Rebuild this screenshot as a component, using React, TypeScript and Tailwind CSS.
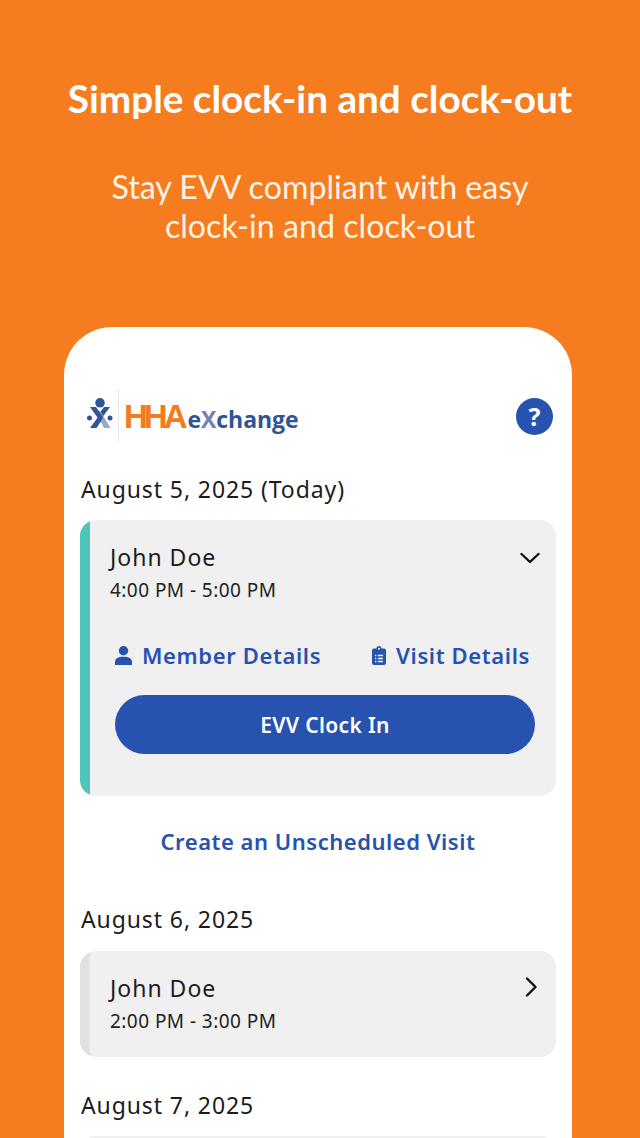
import React from "react";

const Logo = () => (
  <div className="flex items-start h-[52px]">
    <svg width="30" height="38" viewBox="0 0 30 38" className="ml-[5px] mt-[9px]">
      <circle cx="15" cy="4.8" r="4.8" fill="#2f5597" />
      <path d="M25 9 L19 9 L14.5 15 L17.5 19 Z" fill="#2f5597" />
      <path d="M19 30 L25.5 30 L15 12.5 L12 16.5 Z" fill="#9aa7c7" />
      <path d="M5 9 L11 9 L18 19 L15 23 Z" fill="#2f5597" />
      <path d="M5 30 L11.5 30 L17.5 21 L14.5 17 Z" fill="#2f5597" />
      <circle cx="4.5" cy="20" r="2.5" fill="#2f5597" />
      <circle cx="25" cy="20" r="2.5" fill="#2f5597" />
    </svg>
    <div className="w-px h-[52px] bg-[#e6e6e6] ml-[3px] mr-[5px]" />
    <div className="mt-[11px] flex items-baseline font-bold leading-none">
      <span className="font-['Liberation_Sans',sans-serif] text-[33px] tracking-[-4px] text-[#f47c20]">HHA</span>
      <span className="ml-[4px] font-['Open_Sans',sans-serif] text-[23px] tracking-[-0.05px] text-[#2f5597]">
        e<span className="text-[#6f83b3]">X</span>change
      </span>
    </div>
  </div>
);

const PersonIcon = () => (
  <svg width="17" height="19" viewBox="0 0 17 19" fill="#2752b0">
    <circle cx="8.5" cy="4.8" r="4.7" />
    <path d="M0 19 V16 C0 12.6 3.2 10.8 8.5 10.8 C13.8 10.8 17 12.6 17 16 V19 Z" />
  </svg>
);

const ClipboardIcon = () => (
  <svg width="14" height="19" viewBox="0 0 14 19">
    <path
      fill="#2752b0"
      d="M2 2.5 H4.4 C4.6 1 5.6 0 7 0 C8.4 0 9.4 1 9.6 2.5 H12 C13.1 2.5 14 3.4 14 4.5 V17 C14 18.1 13.1 19 12 19 H2 C0.9 19 0 18.1 0 17 V4.5 C0 3.4 0.9 2.5 2 2.5 Z"
    />
    <circle cx="7" cy="2.7" r="1" fill="#f0f0f0" />
    <path d="M3 9.5 H4.3 M5.8 9.5 H11 M3 12.5 H4.3 M5.8 12.5 H11 M3 15.5 H4.3 M5.8 15.5 H11" stroke="#f0f0f0" strokeWidth="1.3" />
  </svg>
);

const Chevron = ({ down }: { down?: boolean }) => (
  <svg width="20" height="20" viewBox="0 0 20 20" fill="none" stroke="#111111" strokeWidth="2.4" strokeLinecap="round" strokeLinejoin="round">
    {down ? <path d="M1.5 6 L10 14 L18.5 6" /> : <path d="M6 1.5 L14.5 10 L6 18.5" />}
  </svg>
);

const DateLabel = ({ children }: { children: React.ReactNode }) => (
  <div className="pl-[1px] text-[23px] leading-[32px] tracking-[0.9px] text-[#1c1c1c]">{children}</div>
);

const linkClass = "text-[22px] font-semibold leading-[30px] tracking-[0.62px] text-[#2752b0]";

export default function App() {
  return (
    <div className="h-[1138px] w-[640px] overflow-hidden bg-[#f67c20] flex flex-col font-['Noto_Sans',sans-serif]">
      <h1 className="mt-[75px] text-center font-['Lato',sans-serif] font-bold text-[38.7px] leading-[46px] text-white">
        Simple clock-in and clock-out
      </h1>
      <p className="mx-auto mt-[46px] w-[480px] text-center font-['Lato',sans-serif] text-[32.2px] leading-[39px] text-[#fff3e6]">
        Stay EVV compliant with easy clock-in and clock-out
      </p>

      <div className="ml-[64px] mt-[82px] w-[508px] flex-1 rounded-t-[48px] bg-white px-[16px] pt-[62px]">
        <div className="flex items-start justify-between">
          <Logo />
          <div className="mr-[3px] mt-[9px] flex h-[37px] w-[37px] items-center justify-center rounded-full bg-[#2752b0] text-[25px] font-bold leading-none text-white">
            ?
          </div>
        </div>

        <div className="mt-[32px]">
          <DateLabel>August 5, 2025 (Today)</DateLabel>
        </div>

        <div className="mt-[15px] flex h-[276px] overflow-hidden rounded-[16px] bg-[#f0f0f0]">
          <div className="w-[10px] bg-[#4fc4bd]" />
          <div className="flex-1 pl-[20px] pr-[20px] pt-[21px]">
            <div className="flex items-start justify-between">
              <div className="text-[23px] leading-[32px] tracking-[1px] text-[#1c1c1c]">John Doe</div>
              <div className="mr-[-4px] mt-[7px]"><Chevron down /></div>
            </div>
            <div className="mt-[1px] text-[19px] leading-[32px] tracking-[0.45px] text-[#222222]">4:00 PM - 5:00 PM</div>

            <div className="mt-[34px] flex items-center justify-between pl-[5px] pr-[6px]">
              <div className="flex items-center gap-[10px]">
                <PersonIcon />
                <span className={linkClass}>Member Details</span>
              </div>
              <div className="flex items-center gap-[10px]">
                <ClipboardIcon />
                <span className={linkClass}>Visit Details</span>
              </div>
            </div>

            <div className="ml-[5px] mt-[25px] flex h-[59px] w-[420px] items-center justify-center rounded-full bg-[#2752b0] pt-[2px] text-[21px] font-semibold tracking-[0.35px] text-white">
              EVV Clock In
            </div>
          </div>
        </div>

        <div className="mt-[29px] text-center text-[22px] font-semibold leading-[32px] tracking-[0.52px] text-[#2752b0]">
          Create an Unscheduled Visit
        </div>

        <div className="mt-[46px]">
          <DateLabel>August 6, 2025</DateLabel>
        </div>

        <div className="mt-[16px] flex h-[106px] overflow-hidden rounded-[16px] bg-[#f0f0f0]">
          <div className="w-[10px] bg-[#e2e2e2]" />
          <div className="flex-1 pl-[20px] pr-[20px] pt-[21px]">
            <div className="flex items-start justify-between">
              <div className="text-[23px] leading-[32px] tracking-[1px] text-[#1c1c1c]">John Doe</div>
              <div className="mr-[-5px] mt-[5px]"><Chevron /></div>
            </div>
            <div className="mt-[1px] text-[19px] leading-[32px] tracking-[0.45px] text-[#222222]">2:00 PM - 3:00 PM</div>
          </div>
        </div>

        <div className="mt-[32px]">
          <DateLabel>August 7, 2025</DateLabel>
        </div>
        <div className="mt-[15px] h-[40px] rounded-[16px] bg-[#f0f0f0]" />
      </div>
    </div>
  );
}
